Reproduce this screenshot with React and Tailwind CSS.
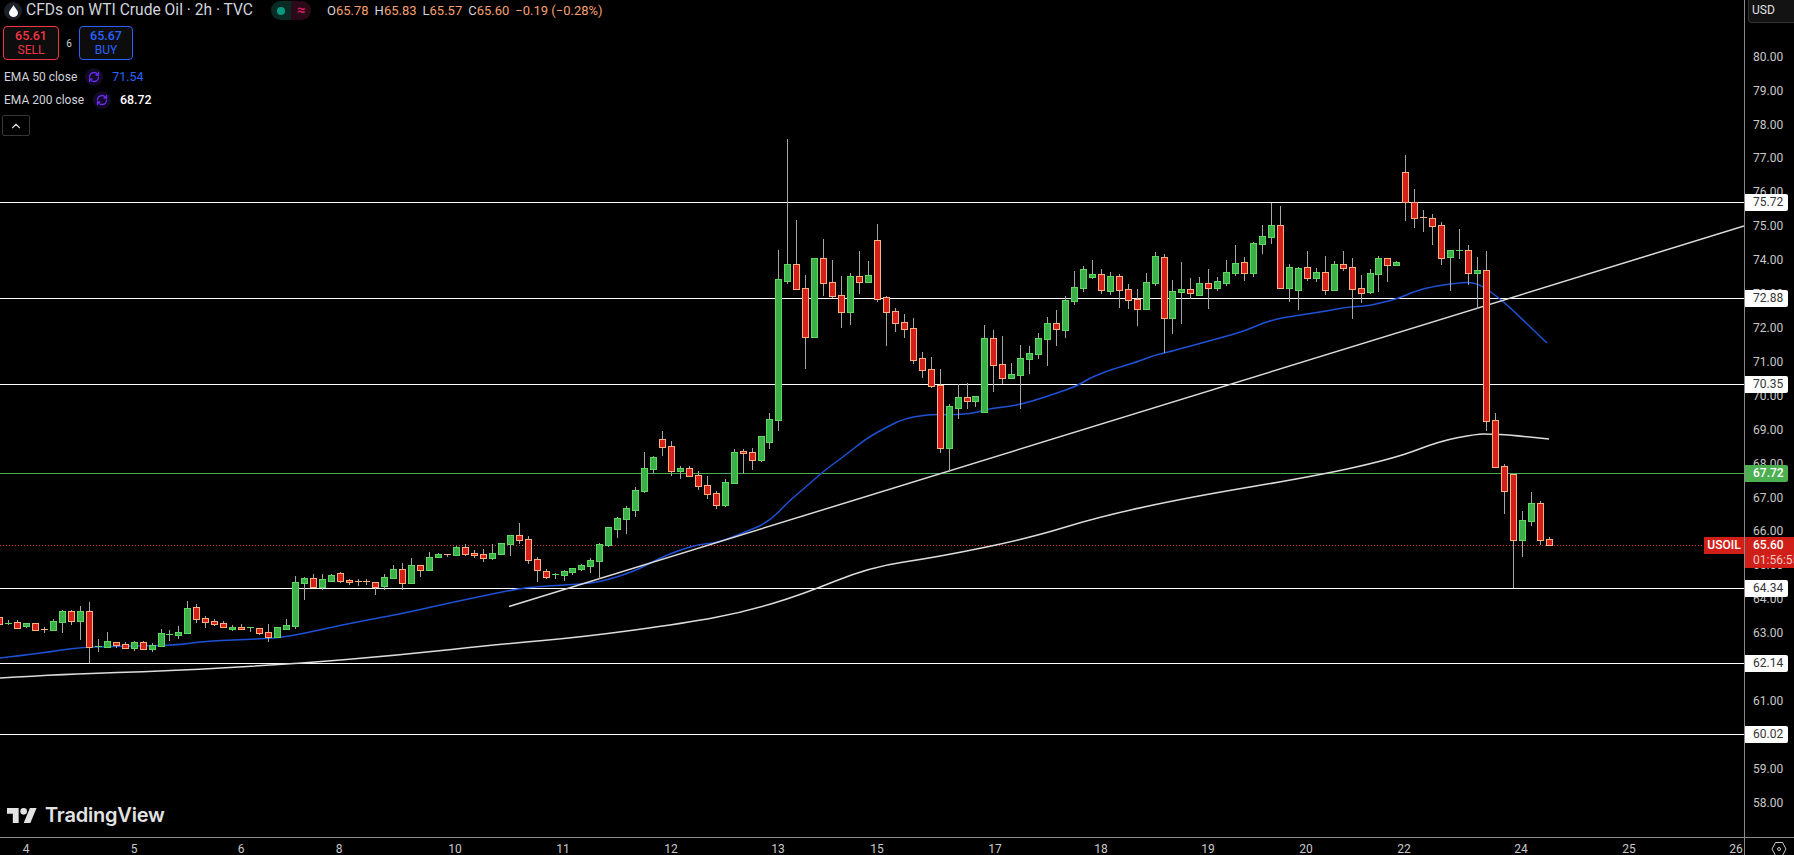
import React from 'react';
import { ChevronUp, RefreshCw } from 'lucide-react';

// [center x, wick top, wick bottom, body top, body bottom, direction]
const candles = [
  [-1, 617, 617, 617, 624, 'd'], [8, 620, 624, 623, 623, 'u'], [17, 620, 628, 622, 628, 'd'], [26, 623, 627, 623, 626, 'u'],
  [35, 623, 630, 623, 630, 'd'], [44, 627, 632, 629, 629, 'd'], [53, 619, 630, 621, 630, 'u'], [62, 610, 632, 611, 622, 'u'],
  [71, 610, 624, 611, 621, 'd'], [80, 606, 639, 611, 621, 'u'], [89, 602, 662, 611, 647, 'd'], [98, 639, 651, 646, 646, 'u'],
  [107, 632, 647, 641, 647, 'u'], [116, 642, 647, 642, 645, 'd'], [125, 642, 648, 644, 648, 'd'], [134, 641, 650, 642, 648, 'u'],
  [143, 641, 649, 642, 649, 'd'], [152, 643, 651, 645, 649, 'u'], [161, 629, 646, 633, 646, 'u'], [169, 630, 640, 634, 634, 'u'],
  [178, 626, 638, 632, 635, 'u'], [187, 601, 633, 608, 633, 'u'], [196, 604, 622, 607, 619, 'd'], [205, 616, 627, 618, 622, 'd'],
  [214, 619, 625, 621, 624, 'd'], [223, 621, 627, 623, 627, 'd'], [232, 625, 630, 627, 629, 'u'], [241, 624, 629, 627, 629, 'd'],
  [250, 627, 631, 627, 627, 'u'], [259, 628, 634, 628, 633, 'd'], [268, 624, 641, 632, 637, 'd'], [277, 627, 637, 627, 637, 'u'],
  [286, 619, 628, 625, 629, 'u'], [295, 576, 628, 582, 626, 'u'], [304, 577, 599, 578, 583, 'u'], [313, 574, 587, 578, 587, 'd'],
  [322, 574, 589, 579, 587, 'u'], [331, 574, 581, 575, 581, 'u'], [340, 572, 582, 573, 581, 'd'], [349, 579, 584, 580, 582, 'd'],
  [358, 579, 585, 581, 581, 'd'], [366, 579, 584, 581, 581, 'd'], [375, 582, 594, 582, 587, 'd'], [384, 574, 589, 577, 586, 'u'],
  [393, 565, 578, 569, 578, 'u'], [402, 563, 589, 569, 583, 'd'], [411, 558, 583, 565, 583, 'u'], [420, 565, 576, 565, 570, 'd'],
  [429, 552, 570, 557, 570, 'u'], [438, 553, 557, 554, 557, 'u'], [447, 554, 556, 554, 554, 'd'], [456, 546, 555, 547, 555, 'u'],
  [465, 544, 555, 547, 554, 'd'], [474, 550, 557, 553, 555, 'd'], [483, 549, 561, 554, 558, 'd'], [492, 544, 559, 553, 558, 'u'],
  [501, 543, 554, 543, 554, 'u'], [510, 535, 555, 535, 544, 'u'], [519, 523, 543, 535, 540, 'd'], [528, 536, 563, 539, 560, 'd'],
  [537, 557, 581, 559, 570, 'd'], [546, 569, 578, 571, 577, 'd'], [555, 573, 578, 574, 574, 'u'], [564, 570, 580, 571, 575, 'u'],
  [572, 568, 574, 568, 572, 'u'], [581, 564, 570, 565, 569, 'u'], [590, 558, 572, 560, 566, 'u'], [599, 543, 578, 544, 561, 'u'],
  [608, 527, 546, 527, 545, 'u'], [617, 517, 537, 518, 529, 'u'], [626, 506, 533, 508, 519, 'u'], [635, 487, 516, 490, 510, 'u'],
  [644, 452, 492, 468, 491, 'u'], [653, 456, 472, 457, 469, 'u'], [662, 431, 455, 439, 447, 'd'], [671, 441, 475, 446, 471, 'd'],
  [680, 466, 478, 468, 471, 'u'], [689, 466, 476, 468, 476, 'd'], [698, 471, 489, 475, 486, 'd'], [707, 476, 498, 485, 494, 'd'],
  [716, 491, 508, 493, 505, 'd'], [725, 479, 506, 482, 505, 'u'], [734, 449, 483, 452, 483, 'u'], [743, 449, 473, 451, 453, 'd'],
  [752, 448, 469, 452, 460, 'd'], [761, 436, 461, 436, 460, 'u'], [769, 413, 448, 419, 442, 'u'], [778, 250, 430, 279, 420, 'u'],
  [787, 139, 283, 264, 281, 'u'], [796, 220, 289, 264, 289, 'd'], [805, 275, 368, 288, 337, 'd'], [814, 258, 337, 258, 337, 'u'],
  [823, 239, 295, 258, 283, 'd'], [832, 260, 297, 282, 296, 'd'], [841, 276, 327, 295, 312, 'd'], [850, 273, 324, 276, 312, 'u'],
  [859, 251, 293, 276, 282, 'd'], [868, 261, 282, 275, 282, 'u'], [877, 224, 301, 240, 299, 'd'], [886, 296, 345, 297, 312, 'd'],
  [895, 308, 331, 311, 323, 'd'], [904, 314, 337, 322, 329, 'd'], [913, 318, 363, 328, 360, 'd'], [922, 352, 377, 358, 370, 'd'],
  [931, 357, 387, 369, 386, 'd'], [940, 369, 452, 385, 448, 'd'], [949, 404, 471, 406, 448, 'u'], [958, 384, 418, 397, 408, 'u'],
  [967, 383, 408, 397, 401, 'd'], [975, 396, 406, 396, 401, 'u'], [984, 325, 412, 338, 412, 'u'], [993, 330, 391, 338, 365, 'd'],
  [1002, 336, 383, 364, 378, 'd'], [1011, 363, 378, 374, 378, 'u'], [1020, 345, 408, 358, 375, 'u'], [1029, 346, 373, 353, 359, 'u'],
  [1038, 333, 358, 338, 354, 'u'], [1047, 317, 365, 323, 339, 'u'], [1056, 310, 345, 323, 329, 'd'], [1065, 296, 337, 300, 330, 'u'],
  [1074, 271, 304, 287, 301, 'u'], [1083, 266, 291, 269, 288, 'u'], [1092, 260, 278, 274, 277, 'u'], [1101, 269, 293, 274, 290, 'd'],
  [1110, 272, 294, 276, 291, 'u'], [1119, 274, 307, 276, 290, 'd'], [1128, 284, 308, 289, 300, 'd'], [1137, 289, 325, 299, 309, 'd'],
  [1146, 273, 309, 282, 309, 'u'], [1155, 252, 285, 256, 283, 'u'], [1164, 254, 352, 257, 318, 'd'], [1172, 280, 333, 291, 318, 'u'],
  [1181, 262, 323, 289, 292, 'u'], [1190, 278, 298, 289, 293, 'd'], [1199, 277, 295, 283, 295, 'u'], [1208, 269, 308, 283, 288, 'd'],
  [1217, 277, 290, 281, 288, 'u'], [1226, 260, 285, 272, 283, 'u'], [1235, 245, 275, 263, 273, 'u'], [1244, 257, 280, 262, 273, 'd'],
  [1253, 242, 276, 243, 273, 'u'], [1262, 225, 253, 236, 244, 'u'], [1271, 203, 243, 225, 237, 'u'], [1280, 206, 288, 225, 288, 'd'],
  [1289, 264, 301, 267, 288, 'u'], [1298, 267, 309, 268, 290, 'u'], [1307, 251, 280, 267, 278, 'd'], [1316, 268, 281, 272, 278, 'u'],
  [1325, 256, 294, 272, 290, 'd'], [1334, 261, 290, 264, 290, 'u'], [1343, 251, 270, 264, 268, 'd'], [1352, 258, 318, 267, 289, 'd'],
  [1361, 275, 302, 288, 293, 'd'], [1370, 269, 293, 273, 292, 'u'], [1378, 256, 291, 258, 274, 'u'], [1387, 258, 281, 258, 265, 'd'],
  [1396, 261, 265, 262, 265, 'u'], [1405, 155, 220, 172, 202, 'd'], [1414, 189, 227, 202, 218, 'd'], [1423, 210, 231, 217, 217, 'd'],
  [1432, 214, 244, 218, 226, 'd'], [1441, 222, 264, 225, 258, 'd'], [1450, 250, 290, 250, 257, 'u'], [1459, 229, 258, 250, 250, 'u'],
  [1468, 245, 284, 250, 273, 'd'], [1477, 257, 308, 270, 273, 'u'], [1486, 251, 430, 270, 421, 'd'], [1495, 413, 467, 420, 467, 'd'],
  [1504, 464, 513, 466, 491, 'd'], [1513, 474, 587, 474, 540, 'd'], [1522, 511, 556, 520, 540, 'u'], [1531, 492, 525, 503, 521, 'u'],
  [1540, 501, 544, 503, 540, 'd'], [1549, 537, 545, 539, 545, 'd'],
];

const ema50 = [[0,658],[43,653],[80,647],[140,646],[177,645],[207,641],[260,639],[287,637],[333,627],[367,620],[400,614],[463,600],[517,589],[533,587],[580,584],[600,582],[633,572],[660,558],[680,550],[700,544],[717,543],[743,533],[769,522],[787,503],[800,492],[825,470],[843,457],[867,438],[887,427],[903,419],[930,414],[953,415],[975,413],[987,409],[1013,406],[1033,401],[1057,393],[1077,386],[1090,378],[1100,374],[1110,370],[1137,362],[1155,355],[1165,353],[1220,338],[1245,331],[1270,320],[1300,315],[1327,311],[1347,307],[1367,306],[1380,303],[1397,299],[1413,292],[1430,287],[1457,283],[1477,282],[1502,300],[1523,320],[1547,343]];
const ema200 = [[0,678],[67,674],[167,671],[293,664],[400,655],[503,644],[583,637],[686,623],[744,612],[801,595],[870,567],[938,557],[1030,538],[1098,517],[1190,497],[1316,476],[1396,458],[1440,441],[1477,434],[1490,434],[1510,435],[1549,439]];

// rounds the corners by running through the midpoints
function smooth(pts) {
  let d = `M${pts[0][0]} ${pts[0][1]}`;
  for (let i = 1; i < pts.length - 1; i++) {
    const mx = (pts[i][0] + pts[i + 1][0]) / 2;
    const my = (pts[i][1] + pts[i + 1][1]) / 2;
    d += ` Q${pts[i][0]} ${pts[i][1]} ${mx} ${my}`;
  }
  const last = pts[pts.length - 1];
  return `${d} L${last[0]} ${last[1]}`;
}

const levels = [
  { y: 202, price: '75.72' },
  { y: 298, price: '72.88' },
  { y: 384, price: '70.35' },
  { y: 588, price: '64.34' },
  { y: 663, price: '62.14' },
  { y: 734, price: '60.02' },
];

const axisPrices = [80, 79, 78, 77, 76, 75, 74, 73, 72, 71, 70, 69, 68, 67, 66, 65, 64, 63, 62, 61, 60, 59, 58];
const priceY = (p) => 56.7 + (80 - p) * 33.91;

const days = [
  ['4', 26], ['5', 134], ['6', 241], ['8', 339], ['10', 455], ['11', 563], ['12', 671], ['13', 778], ['15', 877],
  ['17', 995], ['18', 1101], ['19', 1208], ['20', 1306], ['22', 1404], ['24', 1521], ['25', 1629], ['26', 1736],
];

function Candle({ c }) {
  const [x, wickTop, wickBottom, top, bottom, dir] = c;
  const up = dir === 'u';
  const h = bottom - top + 1;
  return (
    <g>
      <rect x={x} y={wickTop} width="1" height={wickBottom - wickTop + 1} fill="#a6a6a6" />
      <rect x={x - 3} y={top} width="7" height={h} fill={up ? '#5ed85f' : '#fbb17e'} />
      {h > 2 && <rect x={x - 2} y={top + 1} width="5" height={h - 2} fill={up ? '#3bb04a' : '#d4201a'} />}
    </g>
  );
}

function Chart() {
  return (
    <svg className="absolute top-0 left-0" width="1744" height="837">
      <g shapeRendering="crispEdges">
        {levels.map((l) => (
          <rect key={l.price} x="0" y={l.y} width="1744" height="1" fill="#ffffff" />
        ))}
        <rect x="0" y="473" width="1744" height="1" fill="#4caf50" />
        <line x1="0" y1="545.5" x2="1744" y2="545.5" stroke="#e53935" strokeDasharray="1 2" />
      </g>
      <path d={smooth(ema50)} fill="none" stroke="#1f51d6" strokeWidth="1.5" />
      <path d={smooth(ema200)} fill="none" stroke="#dcdcdc" strokeWidth="1.5" />
      <line x1="509" y1="606.5" x2="1744" y2="226" stroke="#dcdcdc" strokeWidth="1.5" />
      <g shapeRendering="crispEdges">
        {candles.map((c) => (
          <Candle key={c[0]} c={c} />
        ))}
      </g>
    </svg>
  );
}

function OhlcValue({ label, value }) {
  return (
    <span className="mr-[6px]">
      <span className="text-[#d1d4dc]">{label}</span>
      {value}
    </span>
  );
}

function Legend() {
  return (
    <div className="absolute top-0 left-0 flex flex-col text-[#d1d4dc]">
      <div className="flex items-center h-[21px]">
        <div className="ml-[4px] w-[18px] h-[18px] rounded-full bg-[#1c2028] flex items-center justify-center">
          <svg width="9" height="12" viewBox="0 0 9 12">
            <path d="M4.5 0C3 3 0 5.5 0 8a4.5 4 0 0 0 9 0C9 5.5 6 3 4.5 0z" fill="#ffffff" />
          </svg>
        </div>
        <span className="ml-[4px] w-[245px] text-[15.6px] whitespace-nowrap">CFDs on WTI Crude Oil · 2h · TVC</span>
        <div className="flex h-[19px] w-[40px] rounded-full overflow-hidden">
          <div className="w-[20px] bg-[#0a2a26] flex items-center justify-center">
            <div className="w-[8px] h-[8px] rounded-full bg-[#089981]" />
          </div>
          <div className="w-[20px] bg-[#2a0a18] flex items-center justify-center text-[15px] font-bold text-[#d81b60]">≈</div>
        </div>
        <div className="ml-[16px] text-[13px] text-[#f7a072] whitespace-nowrap">
          <OhlcValue label="O" value="65.78" />
          <OhlcValue label="H" value="65.83" />
          <OhlcValue label="L" value="65.57" />
          <OhlcValue label="C" value="65.60" />
          <span>−0.19 (−0.28%)</span>
        </div>
      </div>
      <div className="flex items-center mt-[5px] ml-[3px]">
        <div className="w-[56px] h-[34px] rounded-[4px] border border-[#f23645] bg-[#0d0d0d] flex flex-col items-center justify-center leading-[14px] text-[#f23645]">
          <span className="text-[12.5px] font-medium">65.61</span>
          <span className="text-[12px]">SELL</span>
        </div>
        <span className="w-[20px] text-center text-[10px]">6</span>
        <div className="w-[54px] h-[34px] rounded-[4px] border border-[#2962ff] bg-[#0d0d0d] flex flex-col items-center justify-center leading-[14px] text-[#2962ff]">
          <span className="text-[12.5px] font-medium">65.67</span>
          <span className="text-[12px]">BUY</span>
        </div>
      </div>
      <div className="flex items-center mt-[7px] ml-[4px] h-[20px] text-[12px]">
        <span>EMA 50 close</span>
        <div className="ml-[8px] w-[18px] h-[18px] rounded-full bg-[#120a26] flex items-center justify-center">
          <RefreshCw size={12} strokeWidth={2.6} className="text-[#6a2cf5]" />
        </div>
        <span className="ml-[9px] text-[12.4px] text-[#2962ff]">71.54</span>
      </div>
      <div className="flex items-center mt-[3px] ml-[4px] h-[20px] text-[12px]">
        <span>EMA 200 close</span>
        <div className="ml-[9px] w-[18px] h-[18px] rounded-full bg-[#120a26] flex items-center justify-center">
          <RefreshCw size={12} strokeWidth={2.6} className="text-[#6a2cf5]" />
        </div>
        <span className="ml-[9px] text-[12.4px] font-medium text-white">68.72</span>
      </div>
      <div className="mt-[5px] ml-[2px] w-[28px] h-[21px] rounded-[2px] border border-[#363636] flex items-center justify-center">
        <ChevronUp size={14} className="text-[#d1d4dc]" />
      </div>
    </div>
  );
}

function PriceAxis() {
  return (
    <div className="relative w-[50px] border-l border-[#8a8a8a] text-[12px] text-[#c9c9c9]">
      <div className="absolute top-0 left-[3px] right-0 h-[23px] bg-[#131313] border-l border-b border-[#333333] rounded-bl-[4px] pl-[3px] leading-[21px] text-[#e0e0e0] text-[12px]">
        USD
      </div>
      {axisPrices.map((p) => (
        <span key={p} className="absolute left-[8px] leading-[14px]" style={{ top: priceY(p) - 7 }}>
          {p.toFixed(2)}
        </span>
      ))}
      {levels.map((l) => (
        <span
          key={l.price}
          className="absolute left-0 w-[43px] h-[17px] pl-[8px] leading-[17px] bg-white text-[#333333] rounded-r-[2px]"
          style={{ top: l.y - 8 }}
        >
          {l.price}
        </span>
      ))}
      <span className="absolute top-[465px] left-0 w-[43px] h-[17px] pl-[8px] leading-[17px] bg-[#4caf50] text-white font-medium rounded-r-[2px]">
        67.72
      </span>
      <div className="absolute top-[537px] left-0 right-0 h-[31px] bg-[#d01f18] pl-[8px] leading-[15px] pt-[1px] overflow-hidden whitespace-nowrap">
        <div className="text-white font-medium">65.60</div>
        <div className="text-[#f6c7c2]">01:56:55</div>
      </div>
    </div>
  );
}

function TimeAxis() {
  return (
    <div className="flex h-[18px] border-t border-[#8a8a8a] text-[12px] text-[#c9c9c9]">
      <div className="relative flex-1 overflow-hidden">
        {days.map(([label, x]) => (
          <span key={label} className="absolute top-[4px] leading-[14px] -translate-x-1/2" style={{ left: x }}>
            {label}
          </span>
        ))}
      </div>
      <div className="w-[50px] border-l border-[#8a8a8a] flex items-start justify-end pr-[7px] pt-[3px]">
        <svg width="16" height="16" viewBox="0 0 16 16" fill="none" stroke="#c9c9c9">
          <path d="M4.5 1.5h7L15 8l-3.5 6.5h-7L1 8z" />
          <circle cx="8" cy="8" r="1.5" />
        </svg>
      </div>
    </div>
  );
}

export default function App() {
  return (
    <div className="w-full h-screen bg-black overflow-hidden flex flex-col font-[Roboto,sans-serif]">
      <div className="flex flex-1 min-h-0">
        <div className="relative flex-1">
          <Chart />
          <Legend />
          <div className="absolute left-[7px] top-[806px] flex items-center gap-[8px] text-[#e3e3e3]">
            <svg width="30" height="15" viewBox="0 4 36 18" fill="currentColor">
              <path d="M14 22H7V11H0V4h14v18zM28 22h-8l7.5-18h8L28 22z" />
              <circle cx="20" cy="8" r="4" />
            </svg>
            <span className="text-[20px] leading-[18px] font-semibold font-[Inter,sans-serif] tracking-[-0.2px]">TradingView</span>
          </div>
          <div className="absolute top-[537px] right-0 w-[40px] h-[17px] bg-[#d01f18] text-white text-[12px] font-medium leading-[17px] text-center">
            USOIL
          </div>
        </div>
        <PriceAxis />
      </div>
      <TimeAxis />
    </div>
  );
}
